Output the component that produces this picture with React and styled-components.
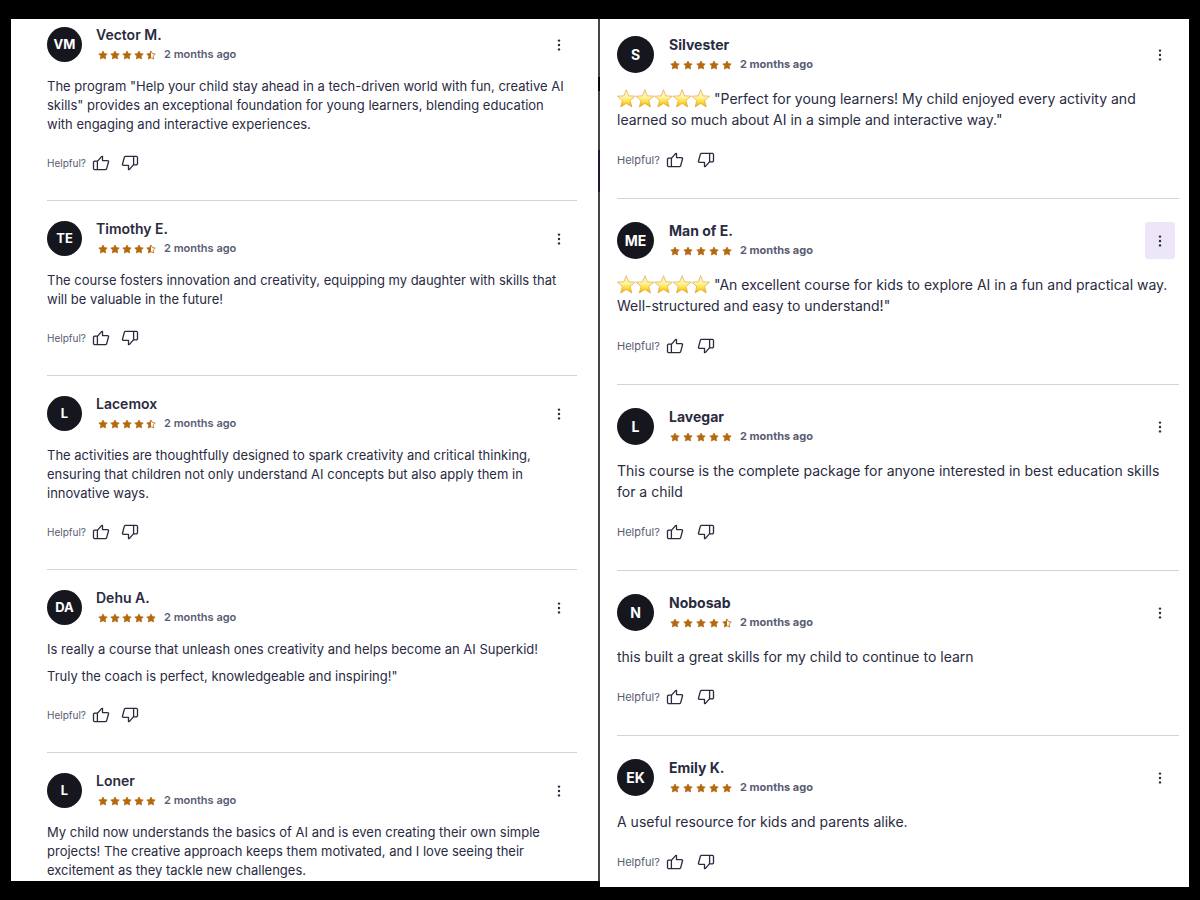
import React from 'react'
import styled, { createGlobalStyle } from 'styled-components'

const GlobalStyle = createGlobalStyle`
    * {
        box-sizing: border-box;
    }

    body {
        margin: 0;
        background: #000;
        color: #2a2b3f;
        font-family: Inter, 'Liberation Sans', sans-serif;
    }
`

export const Page = styled.main`
    display: grid;
    grid-template-columns: 1fr 1fr;
    align-items: start;
    min-height: 100vh;
    padding: 19px 11px 13px;
    background: #000;
`

/* the seam between the panels is grey with a black and a navy stretch near its top */
export const Panel = styled.section`
    background: #fff;
    padding: ${p => (p.$large ? '17px 10px 15px 17px' : '8px 21px 1px 36px')};
    border-right: ${p => (p.$large ? 'none' : '2px solid #454545')};
    border-image: ${p => (p.$large ? 'none' : `linear-gradient(
        #454545 59px, #080808 59px, #080808 73px, #454545 73px,
        #454545 132px, #1c1a38 132px, #1c1a38 174px, #454545 174px
    ) 1`)};
    font-size: ${p => (p.$large ? 14 : 13)}px;
    line-height: ${p => (p.$large ? 21 : 19)}px;
`

export const Item = styled.article`
    &:not(:first-child) {
        margin-top: ${p => (p.$large ? 28 : 27)}px;
        border-top: 1px solid #d1d2e0;
        padding-top: ${p => (p.$large ? 23 : 20)}px;
    }
`

export const Header = styled.header`
    display: flex;
    align-items: center;
    height: ${p => (p.$large ? 37 : 35)}px;
`

export const Avatar = styled.div`
    display: flex;
    align-items: center;
    justify-content: center;
    width: ${p => (p.$large ? 37 : 35)}px;
    height: ${p => (p.$large ? 37 : 35)}px;
    margin-right: ${p => (p.$large ? 15 : 14)}px;
    border-radius: 50%;
    background: #16161f;
    color: #fff;
    font-size: ${p => (p.$large ? 14 : 13)}px;
    font-weight: 700;
`

export const Author = styled.div`
    flex: 1;
    display: grid;
    gap: 2px;
`

export const Name = styled.h3`
    margin: 0;
    font-size: 14px;
    line-height: 18px;
    font-weight: ${p => (p.$large ? 700 : 600)};
`

export const Meta = styled.div`
    display: flex;
    align-items: center;
    gap: 8px;
    color: #595c73;
    font-size: 11px;
    line-height: 17px;
    font-weight: ${p => (p.$large ? 700 : 600)};
`

export const Rating = styled.span`
    display: flex;
    gap: ${p => (p.$large ? 3 : 2)}px;
    padding-left: ${p => (p.$large ? 1 : 2)}px;

    svg {
        width: 10px;
        height: 10px;
    }
`

export const MenuButton = styled.button`
    display: flex;
    align-items: center;
    justify-content: center;
    width: 30px;
    height: 37px;
    margin-right: ${p => (p.$large ? 4 : 3)}px;
    padding: 0;
    border: none;
    border-radius: 3px;
    background: ${p => (p.$active ? '#ece6f8' : 'transparent')};
    color: #2a2b3f;
    cursor: pointer;
`

export const Content = styled.div`
    margin-top: 15px;
    padding-right: 8px;
`

export const Text = styled.p`
    margin: 0;

    & + & {
        margin-top: 8px;
    }
`

export const EmojiRow = styled.svg`
    width: 93px;
    height: 19px;
    margin-right: 4px;
    vertical-align: -4px;
`

export const Footer = styled.footer`
    display: flex;
    align-items: center;
    height: 20px;
    margin-top: ${p => (p.$large ? 20 : 19)}px;
`

export const Helpful = styled.span`
    margin-right: 5px;
    color: #595c73;
    font-size: ${p => (p.$large ? 11 : 10)}px;
    line-height: 18px;
`

export const Votes = styled.div`
    display: flex;
    gap: ${p => (p.$large ? 11 : 9)}px;
`

export const VoteButton = styled.button`
    display: flex;
    align-items: center;
    justify-content: center;
    width: 20px;
    height: 20px;
    padding: 0;
    border: none;
    background: none;
    color: #2a2b3f;
    cursor: pointer;

    svg {
        width: 18px;
        height: 18px;
        transform: ${p => (p.$down ? 'rotate(180deg)' : 'none')};
    }
`

const STAR = 'M10 2 12.7 7.2l5.8.9-4.2 4.1 1 5.8-5.3-2.7L4.7 18l1-5.8L1.5 8.1l5.8-.9z'

const Star = ({ half }) => (
    <svg viewBox="0 0 20 20" aria-hidden="true">
        {half ? (
            <>
                <path d="M10 2v13.3L4.7 18l1-5.8L1.5 8.1l5.8-.9z" fill="#b4690e" />
                <path d={STAR} fill="none" stroke="#b4690e" strokeWidth="1.6" strokeLinejoin="round" />
            </>
        ) : (
            <path d={STAR} fill="#b4690e" stroke="#b4690e" strokeWidth="1.4" strokeLinejoin="round" />
        )}
    </svg>
)

const EmojiStars = () => (
    <EmojiRow viewBox="0 0 93 19" role="img" aria-label="five stars">
        <defs>
            <linearGradient id="gold" x1="0" y1="0" x2="0" y2="1">
                <stop offset="0" stopColor="#fff6c8" />
                <stop offset="0.45" stopColor="#fff3a0" />
                <stop offset="0.7" stopColor="#ffdf3a" />
                <stop offset="1" stopColor="#f2a200" />
            </linearGradient>
        </defs>
        {[0, 1, 2, 3, 4].map(i => (
            <path
                key={i}
                transform={`translate(${i * 18.6} 0)`}
                d="M9.3.7 11.7 6.8l6.5.4-5 4.2 1.7 6.6-5.6-3.6L3.7 18l1.7-6.6-5-4.2 6.5-.4z"
                fill="url(#gold)"
                stroke="#dca84a"
                strokeWidth="0.7"
                strokeLinejoin="round"
            />
        ))}
    </EmojiRow>
)

const Thumb = () => (
    <svg viewBox="0 0 18 18" fill="none" stroke="currentColor" strokeWidth="1.3" strokeLinejoin="round" aria-hidden="true">
        <path d="M5.4 7.2H2.3l-.8.8v6.8l.8.8h3.1z" />
        <path d="M5.4 7.4 9.5 2.6l1-.2v4.2h5.4l.7.9-2 7.4-.8.7H5.4" />
    </svg>
)

const Dots = () => (
    <svg width="4" height="14" viewBox="0 0 4 14" fill="currentColor" aria-hidden="true">
        <circle cx="2" cy="2.6" r="1.2" />
        <circle cx="2" cy="7" r="1.2" />
        <circle cx="2" cy="11.4" r="1.2" />
    </svg>
)

const Review = ({ review, large }) => {
    const { initials, name, rating, emoji, text, active, cut } = review

    return (
        <Item $large={large}>
            <Header $large={large}>
                <Avatar $large={large}>{initials}</Avatar>
                <Author>
                    <Name $large={large}>{name}</Name>
                    <Meta $large={large}>
                        <Rating $large={large} role="img" aria-label={`Rated ${rating} out of 5`}>
                            {[1, 2, 3, 4, 5].map(n => <Star key={n} half={n > rating} />)}
                        </Rating>
                        2 months ago
                    </Meta>
                </Author>
                <MenuButton $large={large} $active={active} aria-label="Additional actions">
                    <Dots />
                </MenuButton>
            </Header>
            <Content>
                {text.map(t => (
                    <Text key={t}>
                        {emoji && <EmojiStars />}
                        {t}
                    </Text>
                ))}
            </Content>
            {!cut && (
                <Footer $large={large}>
                    <Helpful $large={large}>Helpful?</Helpful>
                    <Votes $large={large}>
                        <VoteButton aria-label="Mark as helpful"><Thumb /></VoteButton>
                        <VoteButton $down aria-label="Mark as unhelpful"><Thumb /></VoteButton>
                    </Votes>
                </Footer>
            )}
        </Item>
    )
}

const leftReviews = [
    {
        initials: 'VM',
        name: 'Vector M.',
        rating: 4.5,
        text: ['The program "Help your child stay ahead in a tech-driven world with fun, creative AI skills" provides an exceptional foundation for young learners, blending education with engaging and interactive experiences.'],
    },
    {
        initials: 'TE',
        name: 'Timothy E.',
        rating: 4.5,
        text: ['The course fosters innovation and creativity, equipping my daughter with skills that will be valuable in the future!'],
    },
    {
        initials: 'L',
        name: 'Lacemox',
        rating: 4.5,
        text: ['The activities are thoughtfully designed to spark creativity and critical thinking, ensuring that children not only understand AI concepts but also apply them in innovative ways.'],
    },
    {
        initials: 'DA',
        name: 'Dehu A.',
        rating: 5,
        text: [
            'Is really a course that unleash ones creativity and helps become an AI Superkid!',
            'Truly the coach is perfect, knowledgeable and inspiring!"',
        ],
    },
    {
        initials: 'L',
        name: 'Loner',
        rating: 5,
        cut: true,
        text: ['My child now understands the basics of AI and is even creating their own simple projects! The creative approach keeps them motivated, and I love seeing their excitement as they tackle new challenges.'],
    },
]

const rightReviews = [
    {
        initials: 'S',
        name: 'Silvester',
        rating: 5,
        emoji: true,
        text: ['"Perfect for young learners! My child enjoyed every activity and learned so much about AI in a simple and interactive way."'],
    },
    {
        initials: 'ME',
        name: 'Man of E.',
        rating: 5,
        emoji: true,
        active: true,
        text: ['"An excellent course for kids to explore AI in a fun and practical way. Well-structured and easy to understand!"'],
    },
    {
        initials: 'L',
        name: 'Lavegar',
        rating: 5,
        text: ['This course is the complete package for anyone interested in best education skills for a child'],
    },
    {
        initials: 'N',
        name: 'Nobosab',
        rating: 4.5,
        text: ['this built a great skills for my child to continue to learn'],
    },
    {
        initials: 'EK',
        name: 'Emily K.',
        rating: 5,
        text: ['A useful resource for kids and parents alike.'],
    },
]

export default function App() {
    return (
        <>
            <GlobalStyle />
            <Page>
                <Panel>
                    {leftReviews.map(r => <Review key={r.name} review={r} />)}
                </Panel>
                <Panel $large>
                    {rightReviews.map(r => <Review key={r.name} review={r} large />)}
                </Panel>
            </Page>
        </>
    )
}
